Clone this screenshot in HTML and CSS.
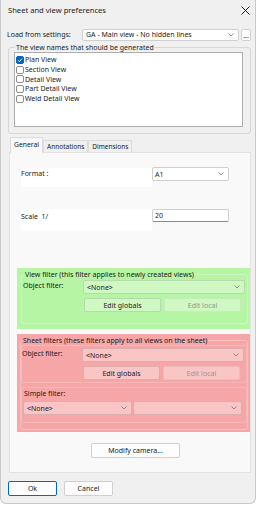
FILE: index.html
```html
<!DOCTYPE html>
<html lang="en">
<head>
    <meta charset="UTF-8">
    <title>Sheet and view preferences</title>
    <link rel="stylesheet" href="styles.css">
</head>
<body>
    <div class="window">
        <!-- Title bar -->
        <div class="titlebar">
            <span class="title">Sheet and view preferences</span>
            <svg class="close" width="9" height="9" viewBox="0 0 9 9">
                <path d="M0.5 0.5 L8.5 8.5 M8.5 0.5 L0.5 8.5" stroke="#222" stroke-width="1"/>
            </svg>
        </div>

        <!-- Load from settings -->
        <div class="load-row">
            <span class="load-label">Load from settings:</span>
            <div class="combo load-combo">
                <span>GA - Main view - No hidden lines</span>
                <svg class="chev" width="6" height="4" viewBox="0 0 6 4"><path d="M0.5 0.5 L3 3 L5.5 0.5" fill="none" stroke="#777" stroke-width="0.8"/></svg>
            </div>
            <div class="btn dots">...</div>
        </div>

        <!-- View names -->
        <fieldset class="names">
            <legend>The view names that should be generated</legend>
            <div class="listbox">
                <div class="item"><span class="check on"><svg width="8" height="8" viewBox="0 0 8 8"><path d="M2 4.2 L3.4 5.6 L6 2.6" fill="none" stroke="#fff" stroke-width="0.9"/></svg></span>Plan View</div>
                <div class="item"><span class="check"></span>Section View</div>
                <div class="item"><span class="check"></span>Detail View</div>
                <div class="item"><span class="check"></span>Part Detail View</div>
                <div class="item"><span class="check"></span>Weld Detail View</div>
            </div>
        </fieldset>

        <!-- Tabs -->
        <div class="tabs">
            <div class="tab active">General</div>
            <div class="tab">Annotations</div>
            <div class="tab">Dimensions</div>
        </div>

        <div class="panel">
            <div class="field-row">
                <div class="label-box">Format :</div>
                <div class="combo small-combo">
                    <span>A1</span>
                    <svg class="chev" width="6" height="4" viewBox="0 0 6 4"><path d="M0.5 0.5 L3 3 L5.5 0.5" fill="none" stroke="#777" stroke-width="0.8"/></svg>
                </div>
            </div>
            <div class="field-row scale-row">
                <div class="label-box tall">Scale&nbsp; 1/</div>
                <div class="input">20</div>
            </div>

            <!-- View filter -->
            <div class="highlight green">
                <fieldset class="filter-group">
                    <legend>View filter (this filter applies to newly created views)</legend>
                    <div class="filter-row">
                        <span class="filter-label">Object filter:</span>
                        <div class="combo filter-combo">
                            <span>&lt;None&gt;</span>
                            <svg class="chev" width="6" height="4" viewBox="0 0 6 4"><path d="M0.5 0.5 L3 3 L5.5 0.5" fill="none" stroke="#777" stroke-width="0.8"/></svg>
                        </div>
                    </div>
                    <div class="button-row">
                        <div class="btn edit">Edit globals</div>
                        <div class="btn edit disabled">Edit local</div>
                    </div>
                </fieldset>
            </div>

            <!-- Sheet filters -->
            <div class="highlight red">
                <fieldset class="filter-group sheet">
                    <legend>Sheet filters (these filters apply to all views on the sheet)</legend>
                    <div class="sub-box">
                        <div class="filter-row">
                            <span class="filter-label">Object filter:</span>
                            <div class="combo filter-combo">
                                <span>&lt;None&gt;</span>
                                <svg class="chev" width="6" height="4" viewBox="0 0 6 4"><path d="M0.5 0.5 L3 3 L5.5 0.5" fill="none" stroke="#777" stroke-width="0.8"/></svg>
                            </div>
                        </div>
                        <div class="button-row">
                            <div class="btn edit">Edit globals</div>
                            <div class="btn edit disabled">Edit local</div>
                        </div>
                    </div>
                    <div class="sub-box simple">
                        <div class="simple-label">Simple filter:</div>
                        <div class="simple-row">
                            <div class="combo half">
                                <span>&lt;None&gt;</span>
                                <svg class="chev" width="6" height="4" viewBox="0 0 6 4"><path d="M0.5 0.5 L3 3 L5.5 0.5" fill="none" stroke="#777" stroke-width="0.8"/></svg>
                            </div>
                            <div class="combo half">
                                <span></span>
                                <svg class="chev" width="6" height="4" viewBox="0 0 6 4"><path d="M0.5 0.5 L3 3 L5.5 0.5" fill="none" stroke="#777" stroke-width="0.8"/></svg>
                            </div>
                        </div>
                    </div>
                </fieldset>
            </div>

            <div class="btn camera">Modify camera...</div>
        </div>

        <!-- Footer -->
        <div class="footer">
            <div class="btn ok">Ok</div>
            <div class="btn cancel">Cancel</div>
        </div>
    </div>
</body>
</html>
```

FILE: styles.css
```css
/* Global */
* {
    margin: 0;
    padding: 0;
    box-sizing: border-box;
}

body {
    width: 256px;
    height: 505px;
    background: #fff;
    font-family: 'Noto Sans', 'DejaVu Sans', sans-serif;
    font-size: 7px;
    color: #1b1b1b;
    overflow: hidden;
}

.window {
    width: 256px;
    height: 504px;
    background: #f0f0f0;
    border: 1px solid #c9c9c9;
    border-top: none;
    border-radius: 0 0 6px 6px;
}

/* Title bar */
.titlebar {
    height: 28px;
    display: flex;
    justify-content: space-between;
    padding: 6px 5px 0 7px;
}

.title {
    font-size: 7.6px;
    line-height: 9px;
}

/* Load row */
.load-row {
    display: flex;
    align-items: center;
    height: 13px;
    padding-left: 6px;
}

.load-label {
    width: 75px;
}

.combo {
    display: flex;
    align-items: center;
    justify-content: space-between;
    background: #fff;
    border: 1px solid #cfcfcf;
    border-radius: 2px;
    padding: 0 4px 0 3px;
}

.load-combo {
    width: 157px;
    height: 12px;
}

.chev {
    flex: none;
}

.btn {
    display: flex;
    align-items: center;
    justify-content: center;
    background: #fdfdfd;
    border: 1px solid #d0d0d0;
    border-radius: 2px;
}

.dots {
    width: 10px;
    height: 12px;
    margin-left: 2px;
    align-items: flex-end;
    padding-bottom: 2px;
    line-height: 5px;
}

/* View names group */
fieldset {
    border: 1px solid #d6d6d6;
    border-radius: 3px;
}

legend {
    line-height: 9px;
    padding: 0 1px;
    margin-left: 1px;
}

.names {
    margin: 2px 4px 0 7px;
    height: 91px;
    padding: 0 7px 5px 5px;
}

.listbox {
    height: 75px;
    background: #fff;
    border: 1px solid #adadad;
    padding: 2px 0 0 1px;
}

.item {
    display: flex;
    align-items: center;
    height: 9.7px;
    line-height: 9px;
}

.check {
    width: 8px;
    height: 8px;
    border: 1px solid #8c8c8c;
    border-radius: 2px;
    background: #fff;
    margin-right: 1px;
    flex: none;
}

.check.on {
    background: #0067c0;
    border-color: #0067c0;
}

.check.on svg {
    display: block;
    margin: -1px 0 0 -1px;
}

/* Tabs */
.tabs {
    display: flex;
    align-items: flex-end;
    height: 15px;
    margin: 3px 0 0 9px;
}

.tab {
    height: 12px;
    padding: 0 3px;
    border: 1px solid #dcdcdc;
    border-bottom: none;
    background: #f0f0f0;
    line-height: 11px;
    font-size: 6.5px;
}

.tab.active {
    height: 16px;
    background: #f9f9f9;
    margin-bottom: -1px;
    padding: 0 3px;
    line-height: 13px;
    font-size: 6.8px;
}

.panel {
    width: 242px;
    height: 321px;
    margin-left: 8px;
    background: #f9f9f9;
    border: 1px solid #e2e2e2;
    padding: 14px 0 0 11px;
}

.field-row {
    display: flex;
    align-items: flex-start;
}

.label-box {
    width: 131px;
    height: 19px;
    margin-top: 1px;
    background: #fff;
    padding: 1px 0 0 0;
}

.label-box.tall {
    height: 22px;
    margin-top: 0;
    padding-top: 3px;
}

.small-combo {
    width: 77px;
    height: 14px;
    padding-left: 2px;
}

.scale-row {
    margin-top: 22px;
}

.input {
    width: 77px;
    height: 13px;
    background: #fff;
    border: 1px solid #d0d0d0;
    border-bottom-color: #8a8a8a;
    border-radius: 2px;
    padding-left: 2px;
    line-height: 11px;
}

/* Highlighted filter areas */
.highlight {
    width: 233px;
    margin-left: -4px;
}

.green {
    margin-top: 37px;
    height: 61px;
    background: #b6f5a4;
    padding: 2px 2px 0 4px;
}

.red {
    margin-top: 5px;
    height: 98px;
    background: #f6a6a6;
    padding: 2px 2px 0 3px;
}

.filter-group {
    border-color: rgba(255, 255, 255, 0.3);
    height: 54px;
    padding: 1px 0 0 1px;
}

.filter-group .combo,
.filter-group .btn {
    background: rgba(255, 255, 255, 0.35);
    border-color: rgba(0, 0, 0, 0.12);
}

.filter-row {
    display: flex;
    align-items: flex-start;
}

.filter-label {
    width: 60px;
    line-height: 9px;
    padding-top: 1px;
}

.filter-combo {
    width: 162px;
    height: 14px;
}

.button-row {
    display: flex;
    gap: 3px;
    margin: 4px 0 0 61px;
}

.edit {
    width: 77px;
    height: 14px;
}

.edit.disabled {
    color: #8a9e8a;
    border-color: rgba(0, 0, 0, 0.05);
}

.sheet {
    height: 94px;
    padding: 0;
}

.sub-box {
    border: 1px solid rgba(255, 255, 255, 0.2);
    border-radius: 2px;
    padding: 2px 0 2px 0;
}

.sheet .filter-label {
    width: 60px;
}

.sheet .button-row {
    margin-left: 61px;
}

.red .edit.disabled {
    color: #b58a8a;
}

.simple {
    margin-top: 4px;
    height: 36px;
    padding: 1px 0 0 1px;
}

.simple-label {
    line-height: 9px;
    padding-left: 1px;
}

.simple-row {
    display: flex;
    gap: 1px;
    margin-top: 3px;
}

.half {
    width: 109px;
    height: 14px;
}

.camera {
    width: 89px;
    height: 15px;
    margin: 11px 0 0 70px;
}

/* Footer */
.footer {
    display: flex;
    gap: 7px;
    padding: 8px 0 0 7px;
}

.ok,
.cancel {
    width: 49px;
    height: 15px;
}

.ok {
    border: 1px solid #0067c0;
    box-shadow: inset 0 0 0 1px #fff;
}
```
